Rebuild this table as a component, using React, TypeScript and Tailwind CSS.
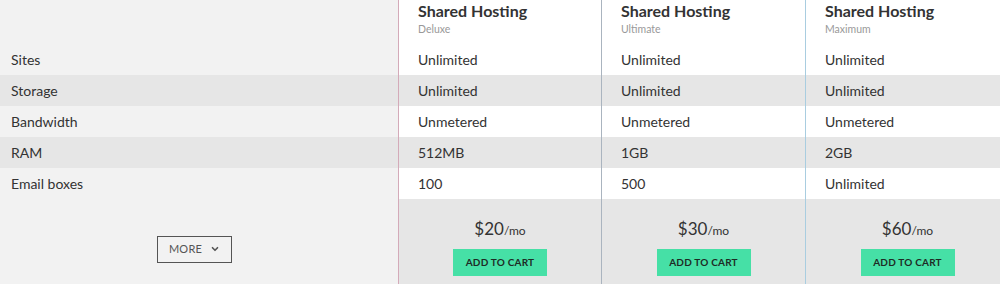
import React from "react";
import { ChevronDown } from "lucide-react";

const features = ["Sites", "Storage", "Bandwidth", "RAM", "Email boxes"];

const plans = [
  {
    name: "Shared Hosting",
    tier: "Deluxe",
    values: ["Unlimited", "Unlimited", "Unmetered", "512MB", "100"],
    price: "$20",
    width: "w-[203px]",
    border: "border-[#d4aab9]",
  },
  {
    name: "Shared Hosting",
    tier: "Ultimate",
    values: ["Unlimited", "Unlimited", "Unmetered", "1GB", "500"],
    price: "$30",
    width: "w-[204px]",
    border: "border-[#aab4bf]",
  },
  {
    name: "Shared Hosting",
    tier: "Maximum",
    values: ["Unlimited", "Unlimited", "Unmetered", "2GB", "Unlimited"],
    price: "$60",
    width: "w-[204px]",
    border: "border-[#a9cde0]",
  },
];

export default function App() {
  return (
    <div
      className="flex w-[1000px] h-[284px] bg-[#f2f2f2] text-[#333] overflow-hidden"
      style={{ fontFamily: "Lato, 'Open Sans', sans-serif" }}
    >
      {/* feature labels */}
      <div className="w-[398px] shrink-0 flex flex-col">
        <div className="h-[44px]" />
        {features.map((f, idx) => (
          <div
            key={f}
            className={`h-[31px] flex items-center pl-[11px] pb-[1px] text-[14px] ${
              idx % 2 === 1 ? "bg-[#e6e6e6]" : ""
            }`}
          >
            {f}
          </div>
        ))}
        <div className="flex-1 pl-[157px] pt-[37px]">
          <button className="w-[75px] h-[27px] border border-[#555] flex items-center justify-center gap-[8px] text-[11px] text-[#555] tracking-[0.02em]">
            MORE
            <ChevronDown size={10} strokeWidth={4} className="mt-[-1px]" />
          </button>
        </div>
      </div>

      {/* plans */}
      {plans.map((p) => (
        <div
          key={p.tier}
          className={`${p.width} shrink-0 flex flex-col border-l ${p.border}`}
        >
          <div className="h-[44px] bg-white pl-[19px] pt-[1px]">
            <div className="text-[16px] font-bold leading-[20px]">{p.name}</div>
            <div className="text-[10.5px] text-[#999] leading-[14px] mt-[1px]">
              {p.tier}
            </div>
          </div>
          {p.values.map((v, idx) => (
            <div
              key={idx}
              className={`h-[31px] flex items-center pl-[19px] pb-[1px] text-[14px] ${
                idx % 2 === 1 ? "bg-[#e6e6e6]" : "bg-white"
              }`}
            >
              {v}
            </div>
          ))}
          <div className="flex-1 bg-[#e6e6e6] flex flex-col items-center pt-[20px]">
            <div className="leading-[20px] text-[#333]">
              <span className="text-[17px]">{p.price}</span>
              <span className="text-[12px]">/mo</span>
            </div>
            <button className="mt-[8px] w-[94px] h-[27px] bg-[#46e0a6] text-[10px] font-bold text-[#1e2b25] tracking-[0.02em]">
              ADD TO CART
            </button>
          </div>
        </div>
      ))}
    </div>
  );
}
